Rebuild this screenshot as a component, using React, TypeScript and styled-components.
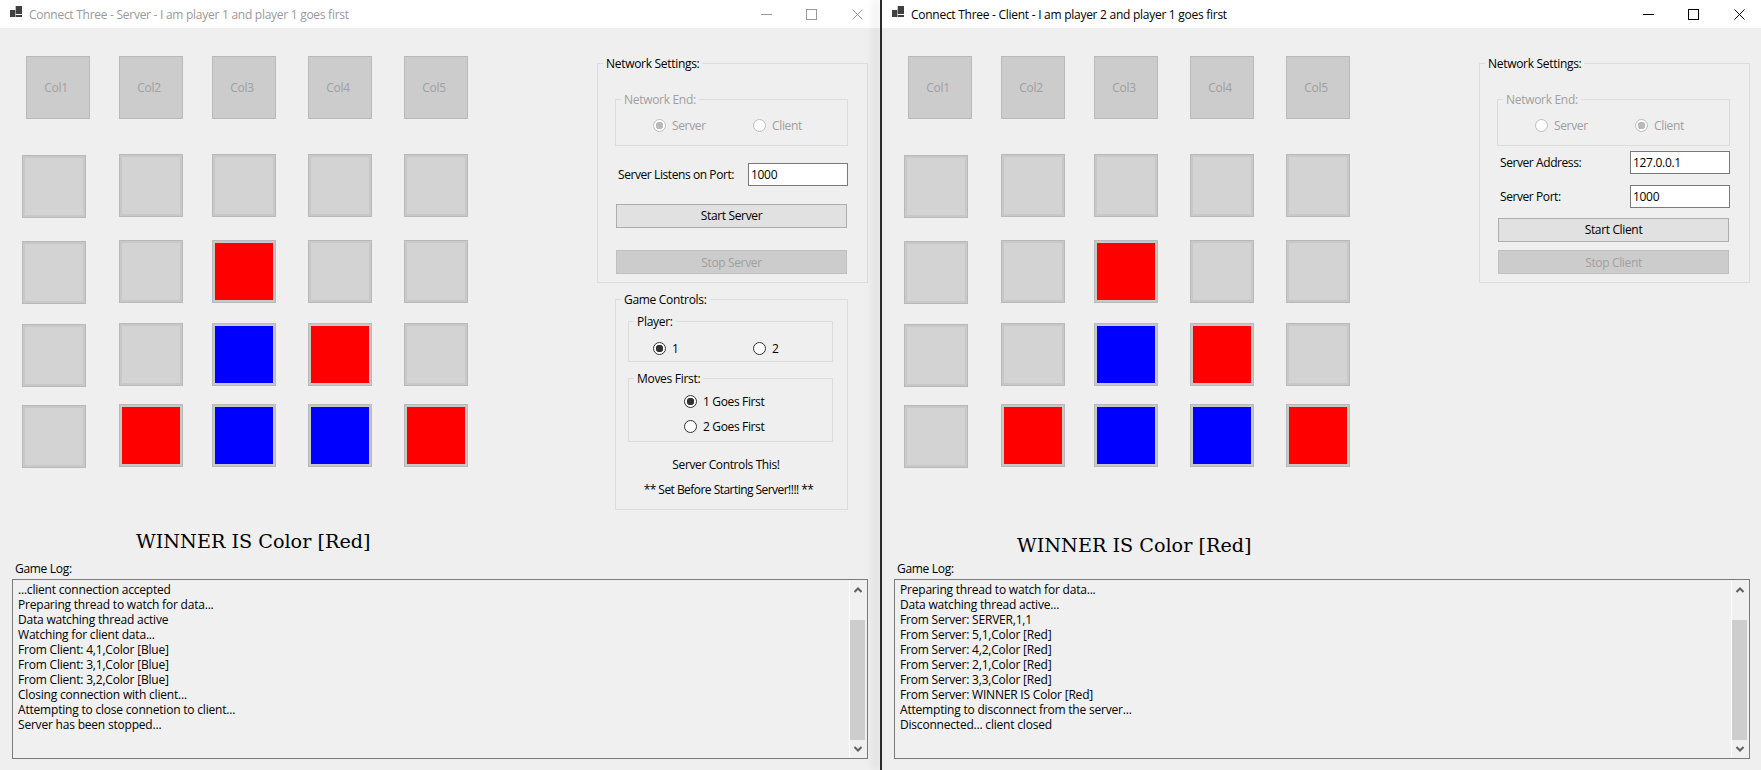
import React from 'react';
import styled, { createGlobalStyle } from 'styled-components';

const GlobalStyle = createGlobalStyle`
  html, body {
    margin: 0;
    padding: 0;
    height: 770px;
    overflow: hidden;
    background: #efefef;
  }

  * {
    box-sizing: border-box;
  }
`;

const Desktop = styled.div`
  display: flex;
  width: 1762px;
  height: 770px;
  font-family: 'Open Sans', 'Noto Sans', sans-serif;
  font-size: 12px;
  letter-spacing: -0.3px;
  color: #000;
`;

const Divider = styled.div`
  position: relative;
  z-index: 2;
  flex: 0 0 2px;
  background: #2b2b2b;
  box-shadow: -5px 0 9px rgba(0, 0, 0, 0.22);
`;

const Frame = styled.section`
  flex: 0 0 880px;
  height: 770px;
  background: #efefef;
`;

const TitleBar = styled.header`
  display: flex;
  align-items: center;
  height: 28px;
  padding-left: 10px;
  background: #fff;
`;

const AppIcon = styled.svg`
  flex: none;
  width: 12px;
  height: 12px;
  margin: 0 7px 4px 0;
  fill: #404040;
`;

const Title = styled.span<{ $active: boolean }>`
  flex: 1;
  letter-spacing: -0.27px;
  color: ${(props) => (props.$active ? '#000' : '#999')};
`;

const WindowButton = styled.div<{ $active: boolean }>`
  display: flex;
  align-items: center;
  justify-content: center;
  width: 45.5px;
  height: 28px;

  svg {
    width: 11px;
    height: 11px;
    fill: none;
    stroke: ${(props) => (props.$active ? '#000' : '#999')};
    stroke-width: 1;
  }
`;

const Top = styled.div`
  display: grid;
  grid-template-columns: 597px 271px;
  height: 500px;
`;

const Board = styled.div`
  display: grid;
  grid-template-columns: 93px 93px 96px 96px 64px;
  grid-template-rows: 98px 86px 83px 81px 63px;
  align-items: start;
  padding: 28px 0 0 26px;
`;

const ColButton = styled.div`
  display: flex;
  align-items: center;
  justify-content: center;
  width: 64px;
  height: 63px;
  padding-right: 4px;
  background: #ccc;
  border: 1px solid #b9b9b9;
  color: #a0a0a0;
`;

const Cell = styled.div<{ $fill: string; $first: boolean }>`
  width: 64px;
  height: 63px;
  margin: ${(props) => (props.$first ? '1px 0 0 -4px' : '0')};
  background: ${(props) => props.$fill};
  border: 1px solid #b9b9b9;
  box-shadow: inset 0 0 0 2px #c8c8c8;
`;

const Side = styled.aside`
  padding-top: 35px;
`;

const Group = styled.fieldset<{ $w: number; $h: number; $top?: number; $left?: number; $pad: string }>`
  position: relative;
  width: ${(props) => props.$w}px;
  height: ${(props) => props.$h}px;
  min-width: 0;
  margin: ${(props) => props.$top || 0}px 0 0 ${(props) => props.$left || 0}px;
  padding: ${(props) => props.$pad};
  border: 1px solid #dcdcdc;
`;

const Legend = styled.div<{ $disabled?: boolean }>`
  position: absolute;
  top: -9px;
  left: 5px;
  padding: 0 3px;
  line-height: 17px;
  background: #efefef;
  color: ${(props) => (props.$disabled ? '#a0a0a0' : '#000')};
`;

const RadioRow = styled.div`
  display: grid;
  grid-template-columns: 100px 100px;
`;

const RadioStack = styled.div`
  display: grid;
  row-gap: 12px;
`;

const RadioItem = styled.div<{ $disabled?: boolean }>`
  display: flex;
  align-items: center;
  gap: 6px;
  height: 13px;
  letter-spacing: -0.35px;
  color: ${(props) => (props.$disabled ? '#a0a0a0' : '#000')};
`;

const RadioDot = styled.span<{ $checked?: boolean; $disabled?: boolean }>`
  flex: none;
  width: 13px;
  height: 13px;
  border: 1px solid ${(props) => (props.$disabled ? '#bcbcbc' : '#333')};
  border-radius: 50%;
  background: ${(props) => {
    const dot = props.$disabled ? '#b8b8b8' : '#333';
    return props.$checked
      ? `radial-gradient(circle, ${dot} 3.5px, #fff 4px)`
      : '#fff';
  }};
`;

const FieldRow = styled.div<{ $top: number }>`
  display: flex;
  align-items: center;
  justify-content: space-between;
  width: 233px;
  height: 23px;
  margin-top: ${(props) => props.$top}px;
  padding-left: 3px;
  letter-spacing: -0.42px;
`;

const TextBox = styled.div`
  width: 100px;
  height: 23px;
  padding-left: 2px;
  line-height: 21px;
  letter-spacing: -0.3px;
  background: #fff;
  border: 1px solid #7a7a7a;
`;

const PushButton = styled.div<{ $top: number; $disabled?: boolean }>`
  width: 231px;
  height: 24px;
  margin: ${(props) => props.$top}px 0 0 1px;
  line-height: ${(props) => (props.$disabled ? '23px' : '22px')};
  letter-spacing: -0.35px;
  text-align: center;
  background: ${(props) => (props.$disabled ? '#ccc' : '#e1e1e1')};
  border: 1px solid ${(props) => (props.$disabled ? '#bfbfbf' : '#adadad')};
  color: ${(props) => (props.$disabled ? '#a0a0a0' : '#000')};
`;

const Note = styled.p<{ $shift: number; $tracking: number }>`
  margin: 0;
  padding-right: ${(props) => props.$shift}px;
  line-height: 25px;
  letter-spacing: ${(props) => props.$tracking}px;
  text-align: center;
`;

const Notes = styled.div`
  margin-top: 10px;
`;

const Winner = styled.div<{ $drop: number; $left: number }>`
  height: 33px;
  padding: ${(props) => 2 + props.$drop}px 0 0 ${(props) => props.$left}px;
  font-family: 'DejaVu Serif', serif;
  font-size: 19.2px;
  line-height: 24px;
  letter-spacing: 0;
  color: #000;
`;

const LogLabel = styled.div`
  height: 18px;
  padding-left: 15px;
  line-height: 16px;
`;

const LogBox = styled.div`
  display: flex;
  width: 856px;
  height: 180px;
  margin-left: 12px;
  padding: 1px;
  background: #f0f0f0;
  border: 1px solid #7a7a7a;
`;

const LogLines = styled.div`
  flex: 1;
  padding: 1px 0 0 4px;
  line-height: 15px;
  letter-spacing: -0.2px;
`;

const ScrollBar = styled.div`
  display: flex;
  flex-direction: column;
  align-items: flex-end;
  flex: 0 0 17px;
  border-left: 1px solid #fff;
`;

const ScrollArrow = styled.div`
  display: flex;
  align-items: center;
  justify-content: center;
  width: 16px;
  height: 17px;

  svg {
    width: 8px;
    height: 6px;
    fill: none;
    stroke: #606060;
    stroke-width: 2;
  }
`;

const ScrollThumb = styled.div`
  flex: none;
  width: 15px;
  height: 120px;
  margin: 22px 1px 0 0;
  background: #cdcdcd;
`;

const e = '#d3d3d3';
const r = '#f00';
const b = '#00f';

const cells = [
  [e, e, e, e, e],
  [e, e, r, e, e],
  [e, e, b, r, e],
  [e, r, b, b, r],
];

const columns = ['Col1', 'Col2', 'Col3', 'Col4', 'Col5'];

const serverLog = [
  '...client connection accepted',
  'Preparing thread to watch for data...',
  'Data watching thread active',
  'Watching for client data...',
  'From Client: 4,1,Color [Blue]',
  'From Client: 3,1,Color [Blue]',
  'From Client: 3,2,Color [Blue]',
  'Closing connection with client...',
  'Attempting to close connetion to client...',
  'Server has been stopped...',
];

const clientLog = [
  'Preparing thread to watch for data...',
  'Data watching thread active...',
  'From Server: SERVER,1,1',
  'From Server: 5,1,Color [Red]',
  'From Server: 4,2,Color [Red]',
  'From Server: 2,1,Color [Red]',
  'From Server: 3,3,Color [Red]',
  'From Server: WINNER IS Color [Red]',
  'Attempting to disconnect from the server...',
  'Disconnected... client closed',
];

interface RadioProps {
  label: string;
  checked?: boolean;
  disabled?: boolean;
}

const Radio: React.FC<RadioProps> = ({ label, checked, disabled }) => (
  <RadioItem $disabled={disabled}>
    <RadioDot $checked={checked} $disabled={disabled} />
    {label}
  </RadioItem>
);

interface WindowProps {
  title: string;
  active: boolean;
  log: string[];
  winnerDrop: number;
  winnerLeft: number;
  children: React.ReactNode;
}

const AppWindow: React.FC<WindowProps> = (props) => {
  const { title, active, log, winnerDrop, winnerLeft, children } = props;

  return (
    <Frame>
      <TitleBar>
        <AppIcon viewBox="0 0 12 12">
          <rect x="0" y="4" width="5.3" height="7" />
          <rect x="5.7" y="0" width="6.3" height="8" />
          <rect x="5.7" y="9" width="6.3" height="2" />
        </AppIcon>
        <Title $active={active}>{title}</Title>
        <WindowButton $active={active}>
          <svg viewBox="0 0 11 11">
            <path d="M0 5.5H11" />
          </svg>
        </WindowButton>
        <WindowButton $active={active}>
          <svg viewBox="0 0 11 11">
            <rect x="0.5" y="0.5" width="10" height="10" />
          </svg>
        </WindowButton>
        <WindowButton $active={active}>
          <svg viewBox="0 0 11 11">
            <path d="M0.5 0.5L10.5 10.5M10.5 0.5L0.5 10.5" />
          </svg>
        </WindowButton>
      </TitleBar>
      <Top>
        <Board>
          {columns.map((col) => (
            <ColButton key={col}>{col}</ColButton>
          ))}
          {cells.map((row, y) =>
            row.map((fill, x) => (
              <Cell key={`${y}-${x}`} $fill={fill} $first={x === 0} />
            )),
          )}
        </Board>
        <Side>{children}</Side>
      </Top>
      <Winner $drop={winnerDrop} $left={winnerLeft}>
        WINNER IS Color [Red]
      </Winner>
      <LogLabel>Game Log:</LogLabel>
      <LogBox>
        <LogLines>
          {log.map((line) => (
            <div key={line}>{line}</div>
          ))}
        </LogLines>
        <ScrollBar>
          <ScrollArrow>
            <svg viewBox="0 0 8 6">
              <path d="M0.5 5L4 1.5L7.5 5" />
            </svg>
          </ScrollArrow>
          <ScrollThumb />
          <ScrollArrow>
            <svg viewBox="0 0 8 6">
              <path d="M0.5 1L4 4.5L7.5 1" />
            </svg>
          </ScrollArrow>
        </ScrollBar>
      </LogBox>
    </Frame>
  );
};

const App: React.FC = () => (
  <Desktop>
    <GlobalStyle />
    <AppWindow
      title="Connect Three - Server - I am player 1 and player 1 goes first"
      active={false}
      log={serverLog}
      winnerDrop={0}
      winnerLeft={136}
    >
      <Group $w={271} $h={220} $pad="35px 0 0 17px">
        <Legend>Network Settings:</Legend>
        <Group $w={233} $h={47} $pad="19px 0 0 37px">
          <Legend $disabled>Network End:</Legend>
          <RadioRow>
            <Radio label="Server" checked disabled />
            <Radio label="Client" disabled />
          </RadioRow>
        </Group>
        <FieldRow $top={17}>
          Server Listens on Port:
          <TextBox>1000</TextBox>
        </FieldRow>
        <PushButton $top={18}>Start Server</PushButton>
        <PushButton $top={22} $disabled>
          Stop Server
        </PushButton>
      </Group>
      <Group $w={233} $h={211} $top={16} $left={18} $pad="21px 0 0 12px">
        <Legend>Game Controls:</Legend>
        <Group $w={205} $h={41} $pad="20px 0 0 24px">
          <Legend>Player:</Legend>
          <RadioRow>
            <Radio label="1" checked />
            <Radio label="2" />
          </RadioRow>
        </Group>
        <Group $w={205} $h={64} $top={16} $pad="16px 0 0 55px">
          <Legend>Moves First:</Legend>
          <RadioStack>
            <Radio label="1 Goes First" checked />
            <Radio label="2 Goes First" />
          </RadioStack>
        </Group>
        <Notes>
          <Note $shift={23} $tracking={-0.38}>
            Server Controls This!
          </Note>
          <Note $shift={18} $tracking={-0.54}>
            ** Set Before Starting Server!!!! **
          </Note>
        </Notes>
      </Group>
    </AppWindow>
    <Divider />
    <AppWindow
      title="Connect Three - Client - I am player 2 and player 1 goes first"
      active
      log={clientLog}
      winnerDrop={4}
      winnerLeft={135}
    >
      <Group $w={271} $h={220} $pad="35px 0 0 17px">
        <Legend>Network Settings:</Legend>
        <Group $w={233} $h={47} $pad="19px 0 0 37px">
          <Legend $disabled>Network End:</Legend>
          <RadioRow>
            <Radio label="Server" disabled />
            <Radio label="Client" checked disabled />
          </RadioRow>
        </Group>
        <FieldRow $top={5}>
          Server Address:
          <TextBox>127.0.0.1</TextBox>
        </FieldRow>
        <FieldRow $top={11}>
          Server Port:
          <TextBox>1000</TextBox>
        </FieldRow>
        <PushButton $top={10}>Start Client</PushButton>
        <PushButton $top={8} $disabled>
          Stop Client
        </PushButton>
      </Group>
    </AppWindow>
  </Desktop>
);

export default App;
